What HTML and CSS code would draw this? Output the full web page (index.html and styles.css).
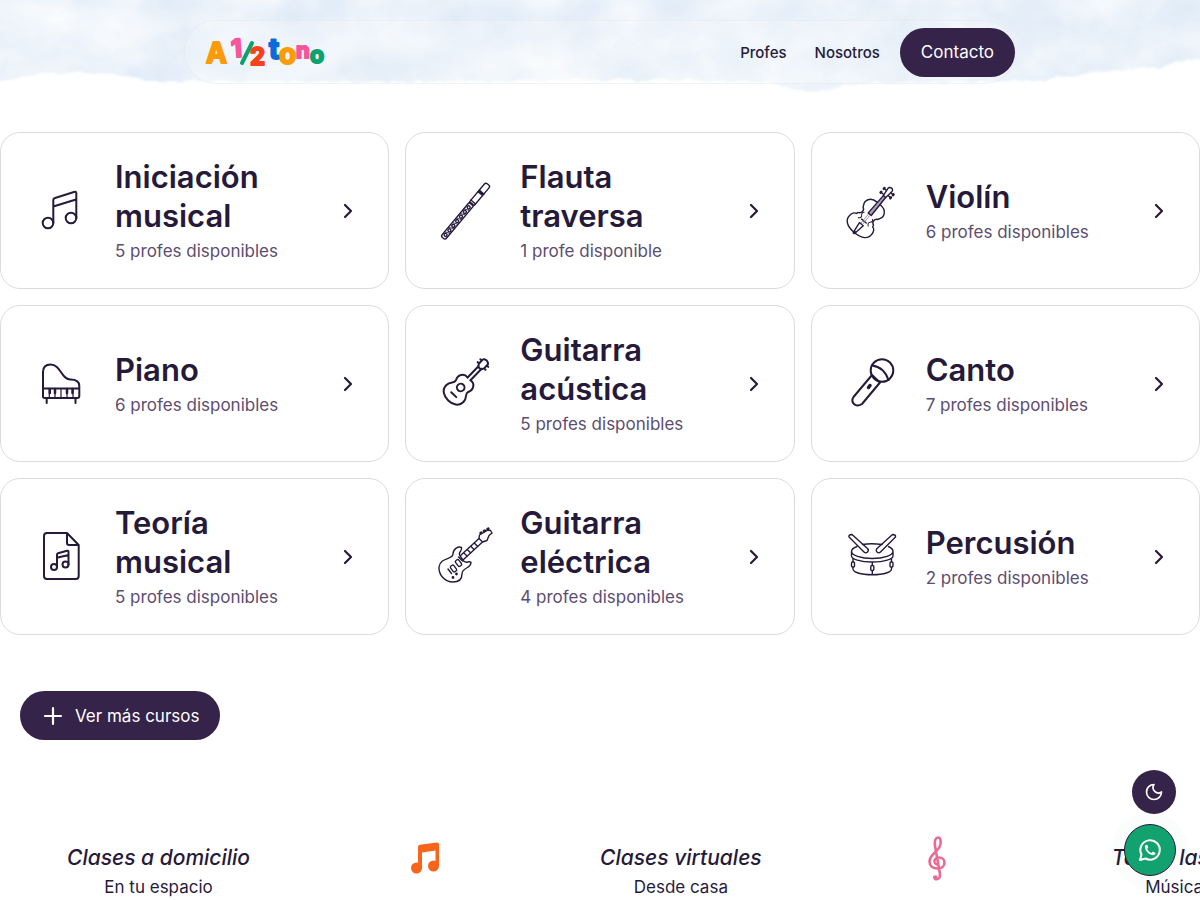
FILE: index.html
```html
<!DOCTYPE html>
<html lang="es">
<head>
  <meta charset="UTF-8" />
  <meta name="viewport" content="width=device-width, initial-scale=1.0"/>
  <title>A 1/2 tono</title>
  <link rel="stylesheet" href="styles.css">
</head>
<body>

  <!-- Cielo de fondo -->
  <svg class="nubes" viewBox="0 0 1200 100" preserveAspectRatio="none" aria-hidden="true">
    <defs>
      <filter id="vapor" x="0" y="0" width="100%" height="100%" color-interpolation-filters="sRGB">
        <feTurbulence type="fractalNoise" baseFrequency="0.014 0.02" numOctaves="4" seed="8"/>
        <feColorMatrix values="0.16 0 0 0 0.845  0.1 0 0 0 0.902  0.04 0 0 0 0.96  0 0 0 0 1"/>
      </filter>
      <filter id="borde"><feTurbulence type="fractalNoise" baseFrequency="0.06" numOctaves="3" seed="4"/><feDisplacementMap in="SourceGraphic" scale="7"/><feGaussianBlur stdDeviation="1"/></filter>
      <clipPath id="cielo"><path d="M-20 -20H1220V57C1190 58 1170 68 1140 68C1110 70 1090 74 1060 77C1030 81 1010 81 980 82C930 83 880 81 840 86C815 95 790 90 770 82C700 79 600 80 500 81C400 82 300 82 210 81C160 83 140 80 120 76C100 68 70 75 45 72C30 73 20 82 -20 82Z"/></clipPath>
    </defs>
    <g filter="url(#borde)">
      <g clip-path="url(#cielo)">
        <rect x="-20" y="-20" width="1240" height="140" filter="url(#vapor)"/>
      </g>
    </g>
  </svg>

  <header class="cabecera">
    <nav class="menu">
      <a class="logo" href="#" aria-label="A 1/2 tono">
        <svg viewBox="0 0 122 36" width="122" height="36">
          <g class="logo-letras">
            <text x="1" y="29" font-size="28" fill="#fb9b0a" stroke="#fb9b0a">A</text>
            <text x="26" y="23" font-size="25" fill="#f7559b" stroke="#f7559b" transform="rotate(-4 34 14)">1</text>
            <path d="M47 9L37 29" stroke="#0ba26d" stroke-width="4" stroke-linecap="round"/>
            <text x="45" y="31" font-size="24" fill="#f5421b" stroke="#f5421b">2</text>
            <text x="64" y="25" font-size="28" fill="#0b6bdc" stroke="#0b6bdc">t</text>
            <text x="74" y="30" font-size="28" fill="#fb9b0a" stroke="#fb9b0a">o</text>
            <text x="91" y="24" font-size="22" fill="#f7559b" stroke="#f7559b">n</text>
            <text x="105" y="29" font-size="23" fill="#0ba26d" stroke="#0ba26d">o</text>
          </g>
        </svg>
      </a>
      <div class="enlaces">
        <a class="enlace" href="#profes">Profes</a>
        <a class="enlace" href="#nosotros">Nosotros</a>
        <a class="boton" href="#contacto">Contacto</a>
      </div>
    </nav>
  </header>

  <main>
    <!-- Cursos -->
    <section class="cursos">
      <a class="curso" href="#">
        <svg class="icono" viewBox="0 0 60 60"><circle cx="17" cy="42" r="5.3"/><circle cx="40" cy="37" r="5.3"/><path d="M22.3 42V19Q22.3 17.500 24 17L43 11Q45.300 10.300 45.300 12V37M22.300 25.500L45 18.500"/></svg>
        <div class="curso-info"><h3>Iniciación musical</h3><p>5 profes disponibles</p></div>
        <svg class="flecha" viewBox="0 0 20 20"><path d="M7 4l6 6-6 6"/></svg>
      </a>
      <a class="curso" href="#">
        <svg class="icono fino" viewBox="0 0 60 60"><g transform="translate(7 57) rotate(-50)"><rect x="0" y="-2.800" width="45" height="5.600" rx="2"/><rect x="44" y="-3" width="26" height="6" rx="2"/><path d="M47 -3v6M58 -3v6M60 -3v6M59 -2v4"/><circle cx="4" cy="0" r="1.500"/><circle cx="10" cy="0" r="1.500"/><circle cx="16" cy="0" r="1.500"/><circle cx="22" cy="0" r="1.500"/><circle cx="28" cy="0" r="1.500"/><circle cx="34" cy="0" r="1.500"/><circle cx="40" cy="0" r="1.500"/><path d="M6 -2.500l2 5M12 -2.500l2 5M18 -2.500l2 5M24 -2.500l2 5M30 -2.500l2 5M36 -2.500l2 5" stroke-width="0.8"/></g></svg>
        <div class="curso-info"><h3>Flauta traversa</h3><p>1 profe disponible</p></div>
        <svg class="flecha" viewBox="0 0 20 20"><path d="M7 4l6 6-6 6"/></svg>
      </a>
      <a class="curso" href="#">
        <svg class="icono fino" viewBox="0 0 60 60"><g transform="translate(24.500 37) rotate(40)"><path d="M0 19C-10 19 -15 15 -14.500 9C-14.500 6 -13 3 -10.500 3L-10 1C-6.500 0 -6.500 -5 -9.500 -6L-10.500 -8C-13 -12 -11 -19 -2 -19M0 19C10 19 15 15 14.500 9C14.500 6 13 3 10.500 3L10 1C6.500 0 6.500 -5 9.500 -6L10.500 -8C13 -12 11 -19 2 -19"/><path d="M-2 -5L-1.500 -28H1.500L2 -5Z" fill="#a79fb6"/><path d="M-3 4h6M-2.500 8h5L1 18h-2Z"/><path d="M-1 -4V7M1 -4V7" stroke-width="0.8" stroke="#8f86a3"/><path d="M-5.500 -3q-2 2 0 4t-1 4M5.500 -3q2 2 0 4t1 4" stroke-width="1"/><path d="M-1.500 -28L-2.500 -35Q-3 -39 0 -39Q3 -39 2.500 -35L1.500 -28M-5 -29h3M-5 -34h3M2 -31h3M2 -35h3"/><path d="M-5.500 -28.500v-1M-5.500 -33.500v-1M5.500 -30.500v-1M5.500 -34.500v-1" stroke-width="2.500"/><circle cx="0" cy="19" r="1"/></g></svg>
        <div class="curso-info"><h3>Violín</h3><p>6 profes disponibles</p></div>
        <svg class="flecha" viewBox="0 0 20 20"><path d="M7 4l6 6-6 6"/></svg>
      </a>
      <a class="curso" href="#">
        <svg class="icono" viewBox="0 0 60 60"><path d="M12 42.500V18C12 13 15 10.500 19.500 10.500C30 10.500 30 25.500 39.500 25.500C46 25.500 48.300 28 48.300 32V42Q48.300 44 46.300 44H14Q12 44 12 42.500ZM12 34.500H48M15.700 44v5M44.500 44v5"/><path d="M18.300 35v9M24 35v9M30 35v9M36 35v9M42 35v9" stroke-width="1.200"/><path d="M18.800 35v4M24 35v4M36 35v4M41.500 35v4" stroke-width="2.500"/></svg>
        <div class="curso-info"><h3>Piano</h3><p>6 profes disponibles</p></div>
        <svg class="flecha" viewBox="0 0 20 20"><path d="M7 4l6 6-6 6"/></svg>
      </a>
      <a class="curso" href="#">
        <svg class="icono" viewBox="0 0 60 60"><g transform="translate(24.700 33.500) rotate(44)"><path d="M-2 -12C-8 -13 -11 -7 -8.500 -2C-7 2 -12 2 -12 8.500C-12 15 -6 18 0 18S12 15 12 8.500C12 2 7 2 8.500 -2C11 -7 8 -13 2 -12"/><circle cx="0" cy="0" r="3.800"/><path d="M-3.500 10h7M-2 -12V-28M2 -12V-28M-2 -27L-3.500 -30V-35Q-3.500 -37 0 -37.500Q3.500 -37 3.500 -35V-30L2 -27ZM-5.500 -30h1M-5.500 -34h1M4.500 -30h1M4.500 -34h1"/></g></svg>
        <div class="curso-info"><h3>Guitarra acústica</h3><p>5 profes disponibles</p></div>
        <svg class="flecha" viewBox="0 0 20 20"><path d="M7 4l6 6-6 6"/></svg>
      </a>
      <a class="curso" href="#">
        <svg class="icono" viewBox="0 0 60 60"><circle cx="40" cy="16.500" r="11.300"/><path d="M30 11.500Q42 13 46.500 26M30 21L38 28.500M30 21L11.500 43Q9 47 12 50T20 50L38 28.500"/><path d="M26.500 33.500l1.500-2" stroke-width="3.500"/></svg>
        <div class="curso-info"><h3>Canto</h3><p>7 profes disponibles</p></div>
        <svg class="flecha" viewBox="0 0 20 20"><path d="M7 4l6 6-6 6"/></svg>
      </a>
      <a class="curso" href="#">
        <svg class="icono" viewBox="0 0 60 60"><path d="M36 6H16Q13 6 13 9V49Q13 52 16 52H45Q47.700 52 47.700 49V18ZM36 6V16Q36 18 38 18H47.700"/><circle cx="23" cy="40" r="3"/><circle cx="34.500" cy="37.500" r="3"/><path d="M26 40V28Q26 26.500 27 26.300L36 23.700Q37.500 23.400 37.500 25V37.500M26 30.700L37.500 28"/></svg>
        <div class="curso-info"><h3>Teoría musical</h3><p>5 profes disponibles</p></div>
        <svg class="flecha" viewBox="0 0 20 20"><path d="M7 4l6 6-6 6"/></svg>
      </a>
      <a class="curso" href="#">
        <svg class="icono fino" viewBox="0 0 60 60"><path d="M24.500 29C20.500 26 27 24 25.500 20.500C22 19 17 22 17 27C17 33 4 30 3 40C2.500 48 9 55 17 55C24 55 26 52 26 47C26 40 35 42 35 35.500C33 33 29 38 27 33"/><path d="M24 29L43 11.500L46.500 15L27 33Z"/><path d="M28 26l3 3M31.500 22.700l3 3M35 19.500l3 3M38.500 16.300l3 3M22.500 30l4 4"/><path d="M43 11.500L43.500 8L52 3L54.500 3.500L56 6L53 8.500L51 13.500L46.500 15"/><path d="M44.500 6L52.500 1.500" stroke-width="2.500" stroke-dasharray="1 3"/><path d="M12 42l3.500 4.500"/><rect x="-2" y="-3.500" width="4" height="7" rx="1.500" transform="translate(17.500 41.500) rotate(-38)"/><rect x="-2" y="-3.500" width="4" height="7" rx="1.500" transform="translate(22.500 36) rotate(-38)"/><circle cx="17" cy="50.500" r="0.700"/><circle cx="20.500" cy="47" r="0.700"/></svg>
        <div class="curso-info"><h3>Guitarra eléctrica</h3><p>4 profes disponibles</p></div>
        <svg class="flecha" viewBox="0 0 20 20"><path d="M7 4l6 6-6 6"/></svg>
      </a>
      <a class="curso" href="#">
        <svg class="icono fino" viewBox="0 0 60 60"><path d="M20.500 17.500Q29 16 40 17.500M46.500 19.500Q51 21.500 51 24.500C51 28 42 31.500 30.300 31.500S9.500 28 9.500 24.500Q9.500 21.500 15 19.500M9.500 24.500V29C9.500 32 18 35 30.300 35S51 32 51 29V24.500M11 32V42C11 45 18 47.700 30.300 47.700S49.500 45 49.500 42V32M30.300 35V47"/><path d="M7 10Q6.500 7.500 10 7.500L25.500 21.500A2.200 2.200 0 1 1 22 25ZM53.500 10Q54 7.500 50.500 7.500L35 21.500A2.200 2.200 0 1 0 38.500 25Z"/><g fill="#fff"><rect x="9.500" y="35" width="3" height="5" rx="1"/><rect x="28.800" y="38.500" width="3" height="5" rx="1"/><rect x="48" y="35" width="3" height="5" rx="1"/></g></svg>
        <div class="curso-info"><h3>Percusión</h3><p>2 profes disponibles</p></div>
        <svg class="flecha" viewBox="0 0 20 20"><path d="M7 4l6 6-6 6"/></svg>
      </a>
    </section>

    <button class="boton ver-mas" type="button">
      <svg viewBox="0 0 20 20" width="20" height="20"><path d="M10 2v16M2 10h16"/></svg>
      Ver más cursos
    </button>

    <!-- Cinta de ventajas -->
    <section class="cinta">
      <div class="ventaja"><h4>Clases a domicilio</h4><p>En tu espacio</p></div>
      <svg class="adorno" viewBox="0 0 36 48"><g fill="#f8641a"><circle cx="9.500" cy="34" r="5.500"/><circle cx="26.500" cy="32" r="5.500"/><path d="M11 13Q11 11 13 10.700L30 8.500Q32 8.300 32 10.500V32H28.500V16.500L15 18.500V34H11Z"/></g></svg>
      <div class="ventaja"><h4>Clases virtuales</h4><p>Desde casa</p></div>
      <svg class="adorno" viewBox="0 0 36 48"><path d="M21 40L16 12C15 6 17 3.500 19 3.500C22 3.500 22.500 9 20.500 13C18 18 10.500 21 10.500 27.500C10.500 32 14 34.500 18.500 34.500C23 34.500 25.500 32 25.500 28.500C25.500 25.500 23 23.500 20 23.500C17 23.500 15 25.500 15.500 28C15.800 29.300 16.500 30 17.500 30.300M21 40C21.700 46 15 46.500 15.300 43" fill="none" stroke="#e96a93" stroke-width="2.600" stroke-linecap="round"/><circle cx="16.700" cy="43" r="1.800" fill="#e96a93"/></svg>
      <div class="ventaja"><h4>Todas las edades</h4><p>Música y más</p></div>
    </section>
  </main>

  <!-- Botones flotantes -->
  <div class="flotantes">
    <button class="tema" type="button" aria-label="Cambiar tema">
      <svg viewBox="0 0 24 24" width="20" height="20"><path d="M12 3a6.500 6.500 0 0 0 9 9a9 9 0 1 1-9-9Z"/></svg>
    </button>
    <a class="whatsapp" href="#" aria-label="WhatsApp">
      <svg viewBox="0 0 24 24" width="24" height="24"><path d="M2 22L3.500 16.500A9.700 9.700 0 1 1 7.500 20.500Z" fill="none" stroke="#fff" stroke-width="2" stroke-linejoin="round"/><path d="M8.300 6.700C7.500 6.700 6.700 7.900 6.900 9.300C7.400 13 11 16.700 14.700 17.200C16.300 17.300 17.600 16.200 17.500 14.900L15 13.500L13.500 15C11.500 14.300 10 12.800 9.200 11L10.300 9.600L9.300 7Z" fill="#fff"/></svg>
    </a>
  </div>

</body>
</html>
```
FILE: styles.css
```css
* { margin: 0; padding: 0; box-sizing: border-box; }

body {
  font-family: Inter, "Open Sans", sans-serif;
  background: #fff;
  color: #261a3b;
  overflow-x: hidden;
}

a {
  color: inherit;
  text-decoration: none;
}

.nubes {
  position: absolute;
  top: 0;
  left: 0;
  width: 100%;
  height: 100px;
  z-index: -1;
}

/* Cabecera */
.cabecera {
  padding: 20px 16px 48px;
}

.menu {
  display: flex;
  align-items: center;
  justify-content: space-between;
  max-width: 832px;
  height: 64px;
  margin: 0 auto;
  padding: 0 0 0 20px;
  border: 1px solid rgba(225, 225, 232, 0.4);
  border-radius: 32px;
  background: rgba(255, 255, 255, 0.2);
}

.logo svg {
  display: block;
  overflow: visible;
}

.logo-letras text {
  font-family: Inter, sans-serif;
  font-weight: 700;
  stroke-width: 2;
  stroke-linejoin: round;
}

.enlaces {
  display: flex;
  align-items: center;
}

.enlace {
  font-size: 15px;
  font-weight: 500;
  margin-right: 28px;
}

.enlace + .enlace {
  margin-right: 20px;
}

.boton {
  display: inline-flex;
  align-items: center;
  gap: 12px;
  height: 49px;
  padding: 0 21px;
  border: none;
  border-radius: 25px;
  background: #352349;
  color: #fff;
  font-family: inherit;
  font-size: 17px;
  cursor: pointer;
}

.boton:hover { background: #46305f; }

/* Cursos */
.cursos {
  display: grid;
  grid-template-columns: repeat(3, 1fr);
  grid-auto-rows: 1fr;
  gap: 16px;
}

.curso {
  display: flex;
  align-items: center;
  gap: 24px;
  padding: 24px 30px;
  border: 1px solid #dcdcde;
  border-radius: 20px;
  background: #fff;
}

.curso:hover { border-color: #352349; }

.icono {
  flex: none;
  width: 60px;
  height: 60px;
  fill: none;
  stroke: #261a3b;
  stroke-width: 2;
  stroke-linecap: round;
  stroke-linejoin: round;
}

.fino { stroke-width: 1.4; }

.curso-info {
  flex: 1;
  min-width: 0;
}

.curso h3 {
  font-size: 31px;
  font-weight: 600;
  line-height: 39px;
}

.curso p {
  margin-top: 4px;
  font-size: 17px;
  line-height: 25px;
  color: #5d4d72;
}

.flecha {
  flex: none;
  width: 20px;
  height: 20px;
  fill: none;
  stroke: #261a3b;
  stroke-width: 2.2;
  stroke-linecap: round;
  stroke-linejoin: round;
}

.ver-mas {
  margin: 56px 20px 0;
  padding-left: 23px;
}

.ver-mas svg {
  stroke: #fff;
  stroke-width: 2.2;
  stroke-linecap: round;
}

/* Cinta */
.cinta {
  display: flex;
  align-items: flex-start;
  gap: 157px;
  margin-top: 94px;
  padding-left: 67px;
  overflow: hidden;
  white-space: nowrap;
}

.ventaja {
  flex: none;
  padding-top: 10px;
  text-align: center;
}

.ventaja h4 {
  font-size: 21px;
  font-weight: 500;
  font-style: italic;
  line-height: 28px;
}

.ventaja p {
  margin-top: 3px;
  font-size: 17px;
  line-height: 24px;
}

.adorno {
  flex: none;
  width: 36px;
  height: 48px;
}

/* Flotantes */
.flotantes {
  position: fixed;
  right: 24px;
  bottom: 24px;
  display: flex;
  flex-direction: column;
  align-items: flex-end;
  gap: 10px;
}

.tema,
.whatsapp {
  display: flex;
  align-items: center;
  justify-content: center;
  border-radius: 50%;
  cursor: pointer;
}

.tema {
  width: 44px;
  height: 44px;
  border: none;
  background: #352349;
}

.tema svg {
  fill: none;
  stroke: #fff;
  stroke-width: 2;
  stroke-linejoin: round;
}

.whatsapp {
  width: 52px;
  height: 52px;
  border: 1px solid #261a3b;
  background: #12a26f;
  box-shadow: 0 0 0 12px rgba(18, 162, 111, 0.02);
}
```
